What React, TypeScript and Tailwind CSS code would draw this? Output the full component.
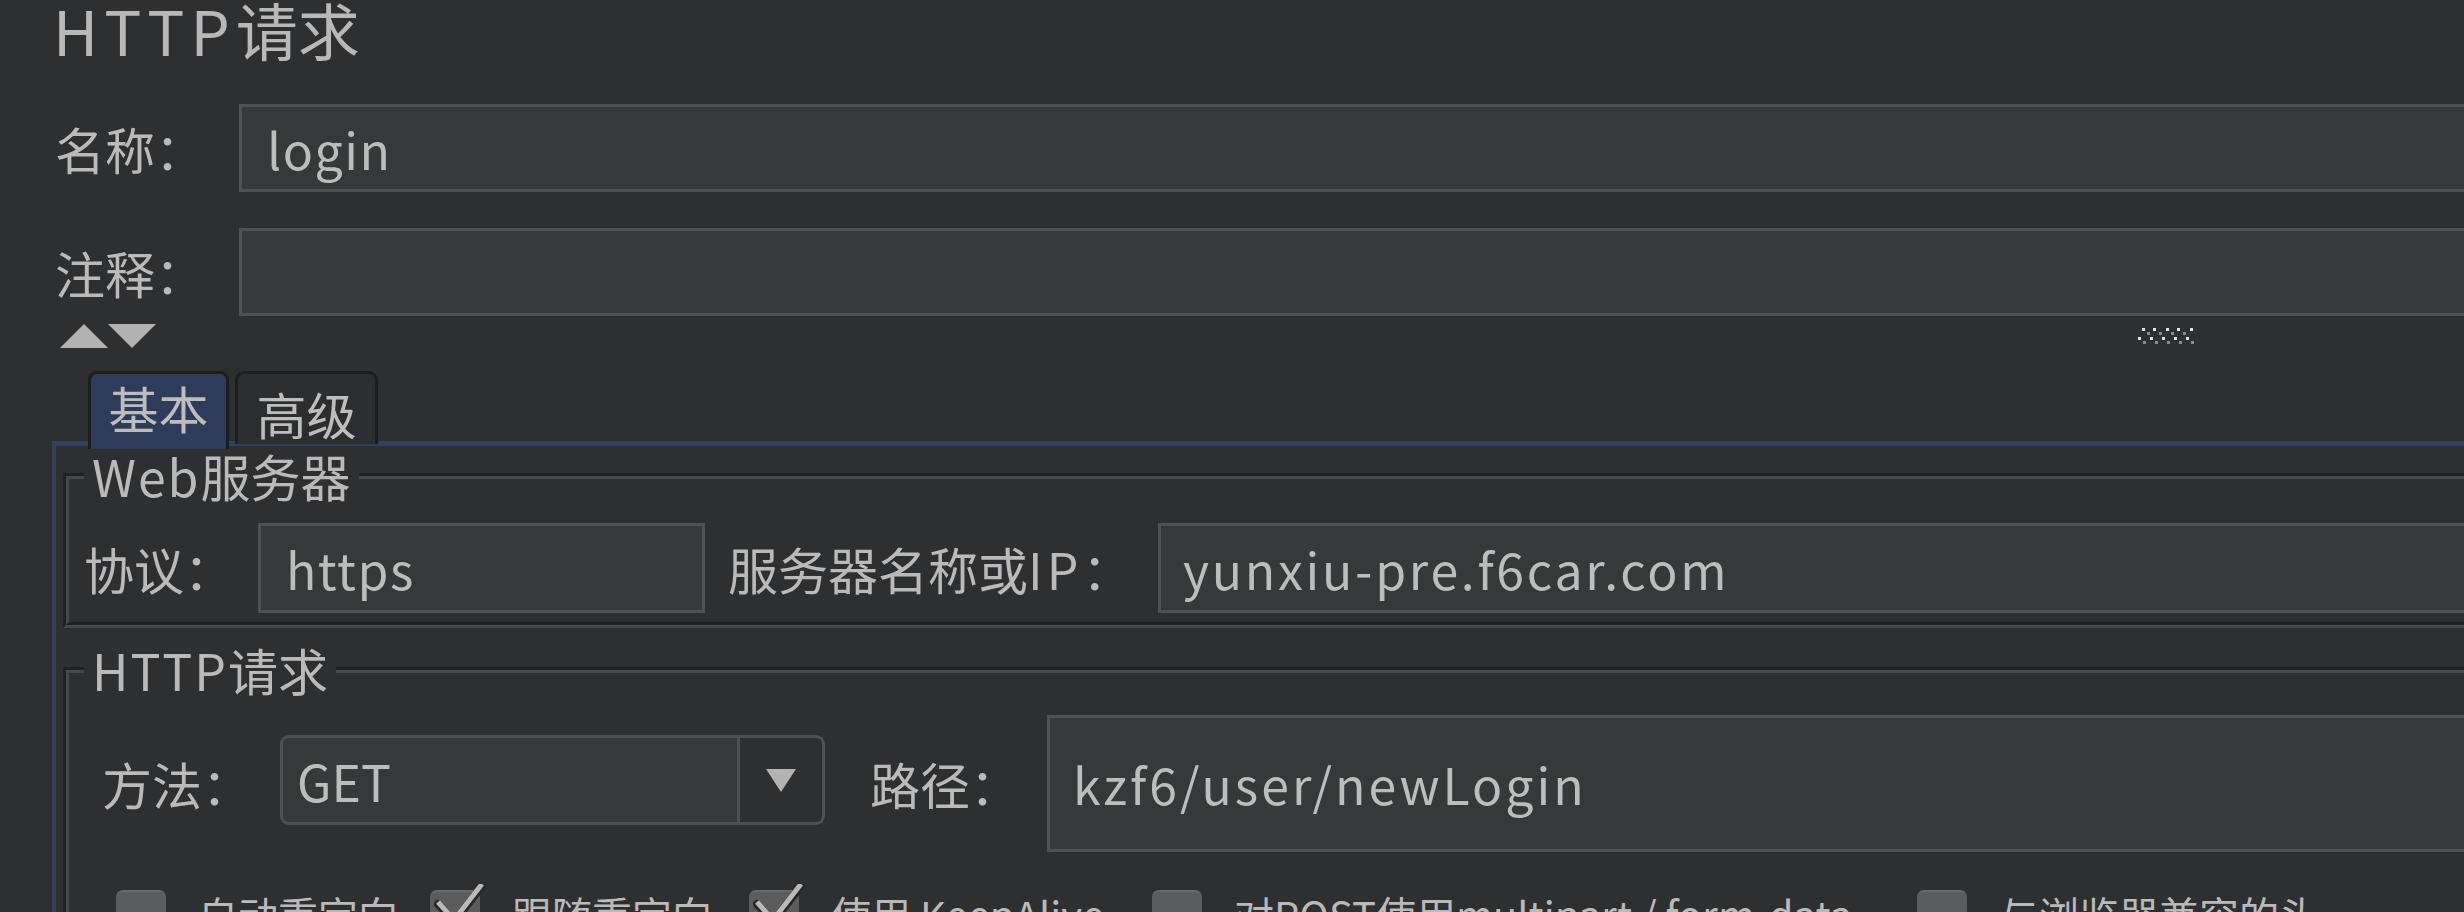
import React from "react";

const INPUT =
  "flex items-center border-[3px] border-[#4e5152] bg-[#35393a] text-[#bdbdbd] text-[50px] whitespace-nowrap";

function Arrows() {
  return (
    <svg width="96" height="24" viewBox="0 0 96 24">
      <polygon points="0,24 24,0 48,24" fill="#b3b3b3" />
      <polygon points="48,0 96,0 72,24" fill="#b3b3b3" />
    </svg>
  );
}

function Grip() {
  const topW = [5, 16, 29, 40, 53];
  const topG = [10, 22, 34, 46];
  const botW = [1, 13, 25, 37, 49];
  const botG = [6, 18, 30, 42, 54];
  return (
    <svg width="60" height="18" viewBox="0 0 60 18">
      {topW.map((x) => (
        <rect key={"tw" + x} x={x} y={1} width={3} height={3} fill="#e6e6e6" />
      ))}
      {topG.map((x) => (
        <rect key={"tg" + x} x={x} y={5} width={3} height={3} fill="#8a8a8a" />
      ))}
      {botW.map((x) => (
        <rect key={"bw" + x} x={x} y={10} width={3} height={3} fill="#e6e6e6" />
      ))}
      {botG.map((x) => (
        <rect key={"bg" + x} x={x} y={14} width={3} height={3} fill="#8a8a8a" />
      ))}
    </svg>
  );
}

function Group({ legend, children }: { legend: React.ReactNode; children: React.ReactNode }) {
  return (
    <div className="relative border-t-[3px] border-l-[3px] border-b-[3px] border-t-[#1f2123] border-l-[#1f2123] border-b-[#43494c]">
      <div className="border-t-[3px] border-l-[3px] border-b-[3px] border-t-[#43494c] border-l-[#43494c] border-b-[#1f2123]">
        {children}
      </div>
      <div className="absolute top-[-26px] left-[18px] bg-[#2e2f31] px-[8px] text-[50px] leading-[50px] text-[#bababa] whitespace-nowrap">
        {legend}
      </div>
    </div>
  );
}

function Check({ checked, label, w }: { checked: boolean; label: React.ReactNode; w: string }) {
  return (
    <div className={"flex items-start gap-[32px] " + w}>
      <div className="relative w-[50px] h-[50px] shrink-0 rounded-[7px] bg-[#5a5c5e] border-t-[2px] border-[#67696a]">
        {checked && (
          <svg
            className="absolute left-[4px] top-[-8px]"
            width="52"
            height="40"
            viewBox="0 0 52 40"
          >
            <polyline
              points="4,20 20,38 48,2"
              fill="none"
              stroke="#262728"
              strokeWidth="8"
              strokeLinecap="round"
            />
            <polyline points="4,18 20,36 48,0" fill="none" stroke="#b9b9b9" strokeWidth="5" />
          </svg>
        )}
      </div>
      <span className="text-[40px] leading-[40px] pt-[4px] text-[#bababa] whitespace-nowrap">
        {label}
      </span>
    </div>
  );
}

export default function App() {
  return (
    <div className="w-[2464px] h-[912px] overflow-hidden bg-[#2e2f31] text-[#bababa] font-['Noto_Sans_CJK_SC','Noto_Sans',sans-serif]">
      <div className="w-[2620px]">
        {/* Title */}
        <div className="h-[58px] leading-[58px] text-[62px] pl-[53px] text-[#b8b8b8] whitespace-nowrap">
          <span className="tracking-[6px]">HTTP</span>请求
        </div>

        {/* Name */}
        <div className="mt-[46px] flex items-center h-[88px] pl-[55px]">
          <div className="w-[184px] text-[50px]">名称：</div>
          <div className={INPUT + " flex-1 h-[88px] pl-[25px] tracking-[1.5px]"}>login</div>
        </div>

        {/* Comment */}
        <div className="mt-[36px] flex items-center h-[88px] pl-[55px]">
          <div className="w-[184px] text-[50px]">注释：</div>
          <div className={INPUT + " flex-1 h-[88px]"} />
        </div>

        {/* Arrows + grip */}
        <div className="mt-[8px] flex items-start h-[24px] pl-[60px]">
          <Arrows />
          <div className="ml-[1981px] mt-[3px]">
            <Grip />
          </div>
        </div>

        {/* Tab pane */}
        <div className="mt-[20px] pl-[52px]">
          <div className="flex items-end h-[73px] pl-[36px] border-b-[3px] border-[#1f2022] box-content">
            <div className="w-[141px] h-[78px] mb-[-8px] rounded-t-[9px] border-[3px] border-b-0 border-[#1c1d1f] bg-[#2f3b5a] flex items-start justify-center pt-[2px] text-[50px] leading-[62px] text-[#bdbdbd] relative z-10">
              基本
            </div>
            <div className="ml-[6px] w-[143px] h-[73px] mb-[-3px] rounded-t-[9px] border-[3px] border-b-0 border-[#1c1d1f] bg-[#2c2d2f] flex items-start justify-center pt-[8px] text-[50px] leading-[62px] text-[#bdbdbd]">
              高级
            </div>
          </div>
          <div className="border-t-[5px] border-l-[4px] border-[#33405e] pl-[7px] pt-[27px] mt-[-3px]">
            {/* Web server group */}
            <Group
              legend={
                <>
                  <span className="tracking-[2px]">Web</span>服务器
                </>
              }
            >
              <div className="flex items-center pt-[44px] pb-[9px] pl-[15px]">
                <div className="w-[174px] text-[50px]">协议：</div>
                <div className={INPUT + " w-[447px] h-[90px] pl-[25px] tracking-[1.5px]"}>https</div>
                <div className="ml-[23px] w-[430px] text-[50px] whitespace-nowrap">
                  服务器名称或<span className="tracking-[4px]">IP</span>：
                </div>
                <div className={INPUT + " flex-1 h-[90px] pl-[22px] tracking-[2.7px]"}>
                  yunxiu-pre.f6car.com
                </div>
              </div>
            </Group>

            {/* HTTP request group */}
            <div className="mt-[39px]">
              <Group
                legend={
                  <>
                    <span className="tracking-[2px]">HTTP</span>请求
                  </>
                }
              >
                <div className="pt-[42px] pl-[33px]">
                  <div className="flex items-start">
                    <div className="w-[178px] h-[137px] flex items-center text-[50px]">方法：</div>
                    <div className="mt-[20px] w-[545px] h-[90px] flex rounded-[9px] border-[3px] border-[#4e5152] overflow-hidden">
                      <div className="flex-1 bg-[#35393a] flex items-center pl-[14px] text-[50px] text-[#bdbdbd]">
                        GET
                      </div>
                      <div className="w-[85px] border-l-[3px] border-[#4e5152] bg-[#2e2f31] flex items-center justify-center">
                        <svg width="30" height="23" viewBox="0 0 30 23">
                          <polygon points="0,0 30,0 15,23" fill="#b3b3b3" />
                        </svg>
                      </div>
                    </div>
                    <div className="ml-[45px] w-[177px] h-[137px] flex items-center text-[50px]">路径：</div>
                    <div className={INPUT + " flex-1 h-[137px] pl-[23px] tracking-[3px]"}>
                      kzf6/user/newLogin
                    </div>
                  </div>
                  <div className="mt-[38px] flex items-start pl-[14px] h-[80px]">
                    <Check checked={false} label="自动重定向" w="w-[314px]" />
                    <Check checked={true} label="跟随重定向" w="w-[319px]" />
                    <Check checked={true} label="使用 KeepAlive" w="w-[403px]" />
                    <Check checked={false} label="对POST使用multipart / form-data" w="w-[765px]" />
                    <Check checked={false} label="与浏览器兼容的头" w="w-[500px]" />
                  </div>
                </div>
              </Group>
            </div>
          </div>
        </div>
      </div>
    </div>
  );
}
